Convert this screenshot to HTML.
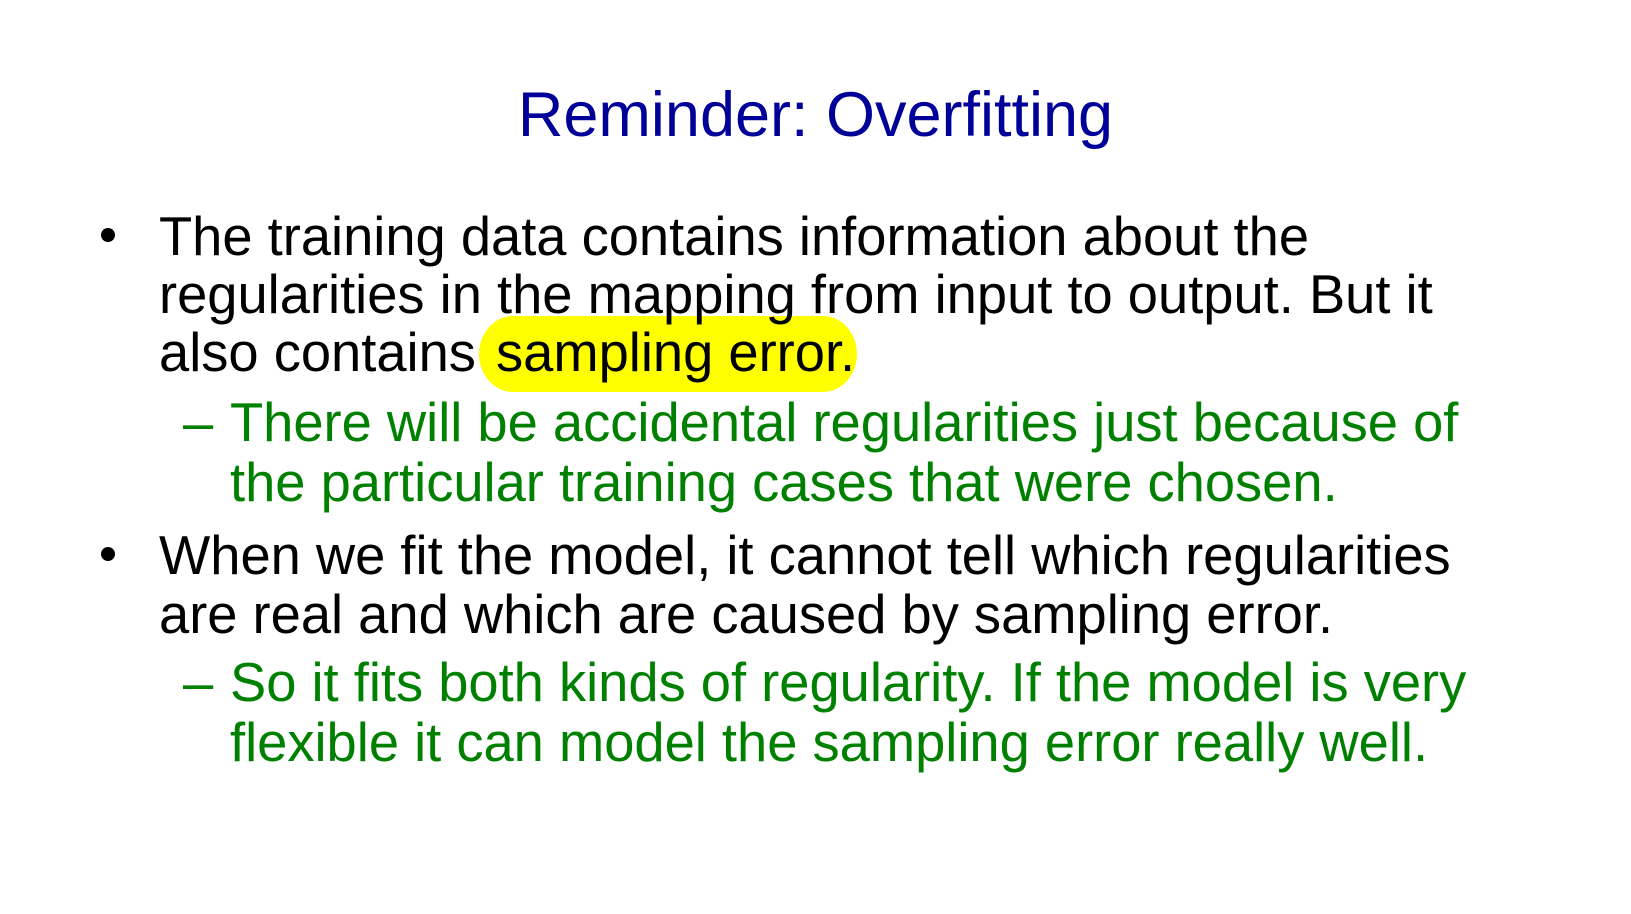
<!DOCTYPE html>
<html><head><meta charset="utf-8"><style>
html,body{margin:0;padding:0;background:#fff;}
body{width:1631px;height:914px;position:relative;overflow:hidden;font-family:"Liberation Sans",Arial,sans-serif;}
.l{position:absolute;font-size:54.3px;line-height:60px;white-space:nowrap;color:#000;}
.g{color:#008000;}
.t{position:absolute;left:0;width:1631px;text-align:center;top:80px;font-size:63px;line-height:70px;color:#000099;}
.hl{position:absolute;left:479px;top:316px;width:378px;height:76px;background:#ffff00;border-radius:34px/38px;}
.b{position:absolute;width:14px;height:14px;border-radius:50%;background:#000;}
</style></head><body>
<div class="t">Reminder: Overfitting</div>
<div class="hl"></div>
<div class="b" style="left:101px;top:228px"></div>
<div class="l" style="left:159px;top:207px">The training data contains information about the</div>
<div class="l" style="left:159px;top:265px">regularities in the mapping from input to output. But it</div>
<div class="l" style="left:159px;top:323px">also contains <span style="margin-left:5px">sampling error.</span></div>
<div class="l g" style="left:183px;top:393px">–</div>
<div class="l g" style="left:230px;top:393px">There will be accidental regularities just because of</div>
<div class="l g" style="left:230px;top:453px">the particular training cases that were chosen.</div>
<div class="b" style="left:101px;top:547px"></div>
<div class="l" style="left:159px;top:526px">When we fit the model, it cannot tell which regularities</div>
<div class="l" style="left:159px;top:585px">are real and which are caused by sampling error.</div>
<div class="l g" style="left:183px;top:653px">–</div>
<div class="l g" style="left:230px;top:653px">So it fits both kinds of regularity. If the model is very</div>
<div class="l g" style="left:230px;top:713px">flexible it can model the sampling error really well.</div>
</body></html>
